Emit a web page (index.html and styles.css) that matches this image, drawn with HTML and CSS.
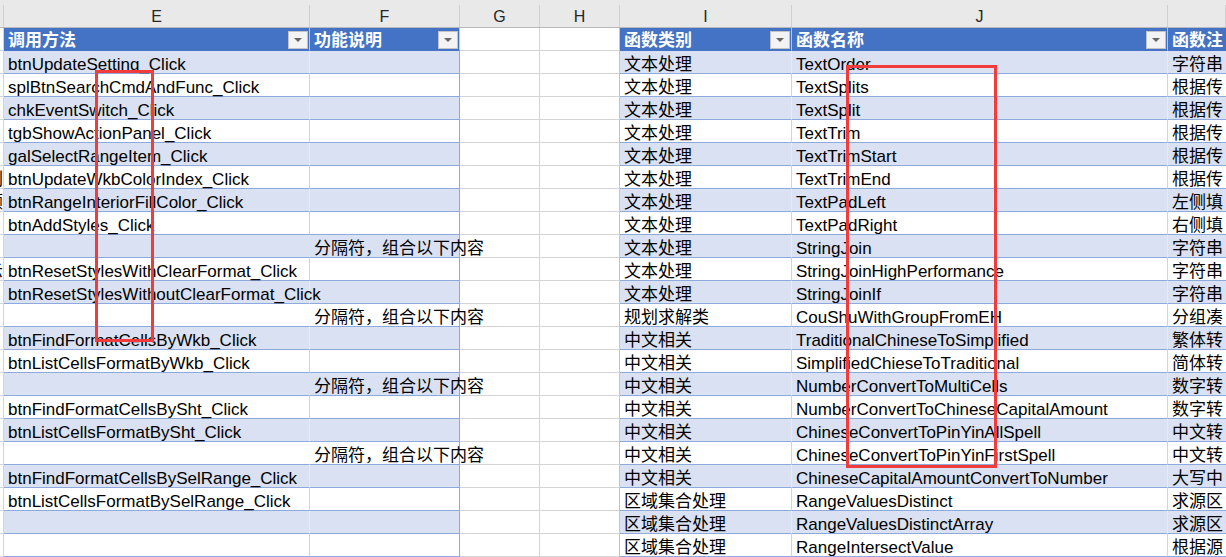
FILE: index.html
```html
<!DOCTYPE html>
<html lang="zh-CN">
<head>
<meta charset="utf-8">
<title>Sheet</title>
<link rel="stylesheet" href="styles.css">
</head>
<body>
<div class="sheet">
  <div class="row colhead">
    <div class="h"></div><div class="h">E</div><div class="h">F</div><div class="h">G</div><div class="h">H</div><div class="h">I</div><div class="h">J</div><div class="h"></div>
  </div>

  <div class="row">
    <div class="c d"></div>
    <div class="c th e"><span>调用方法</span><span class="btn"><i class="tri"></i></span></div>
    <div class="c th f"><span>功能说明</span><span class="btn"><i class="tri"></i></span></div>
    <div class="c g"></div><div class="c h"></div>
    <div class="c th i"><span>函数类别</span><span class="btn"><i class="tri"></i></span></div>
    <div class="c th j"><span>函数名称</span><span class="btn"><i class="tri"></i></span></div>
    <div class="c th k"><span>函数注</span></div>
  </div>

  <div class="row band"><div class="c d"></div><div class="c t e"><span class="ov">btnUpdateSetting_Click</span></div><div class="c t f"></div><div class="c g"></div><div class="c h"></div><div class="c t i">文本处理</div><div class="c t j">TextOrder</div><div class="c t k">字符串</div></div>
  <div class="row"><div class="c d"></div><div class="c t e"><span class="ov">splBtnSearchCmdAndFunc_Click</span></div><div class="c t f"></div><div class="c g"></div><div class="c h"></div><div class="c t i">文本处理</div><div class="c t j">TextSplits</div><div class="c t k">根据传</div></div>
  <div class="row band"><div class="c d"></div><div class="c t e"><span class="ov">chkEventSwitch_Click</span></div><div class="c t f"></div><div class="c g"></div><div class="c h"></div><div class="c t i">文本处理</div><div class="c t j">TextSplit</div><div class="c t k">根据传</div></div>
  <div class="row"><div class="c d"></div><div class="c t e"><span class="ov">tgbShowActionPanel_Click</span></div><div class="c t f"></div><div class="c g"></div><div class="c h"></div><div class="c t i">文本处理</div><div class="c t j">TextTrim</div><div class="c t k">根据传</div></div>
  <div class="row band"><div class="c d"></div><div class="c t e"><span class="ov">galSelectRangeItem_Click</span></div><div class="c t f"></div><div class="c g"></div><div class="c h"></div><div class="c t i">文本处理</div><div class="c t j">TextTrimStart</div><div class="c t k">根据传</div></div>
  <div class="row"><div class="c d"><span>刷</span></div><div class="c t e"><span class="ov">btnUpdateWkbColorIndex_Click</span></div><div class="c t f"></div><div class="c g"></div><div class="c h"></div><div class="c t i">文本处理</div><div class="c t j">TextTrimEnd</div><div class="c t k">根据传</div></div>
  <div class="row band"><div class="c d"><span>颜</span></div><div class="c t e"><span class="ov">btnRangeInteriorFillColor_Click</span></div><div class="c t f"></div><div class="c g"></div><div class="c h"></div><div class="c t i">文本处理</div><div class="c t j">TextPadLeft</div><div class="c t k">左侧填</div></div>
  <div class="row"><div class="c d"></div><div class="c t e"><span class="ov">btnAddStyles_Click</span></div><div class="c t f"></div><div class="c g"></div><div class="c h"></div><div class="c t i">文本处理</div><div class="c t j">TextPadRight</div><div class="c t k">右侧填</div></div>
  <div class="row band"><div class="c d"></div><div class="c t e sep"></div><div class="c t f"><span class="ov">分隔符，组合以下内容</span></div><div class="c g"></div><div class="c h"></div><div class="c t i">文本处理</div><div class="c t j">StringJoin</div><div class="c t k">字符串</div></div>
  <div class="row"><div class="c d"><span>示</span></div><div class="c t e"><span class="ov">btnResetStylesWithClearFormat_Click</span></div><div class="c t f"></div><div class="c g"></div><div class="c h"></div><div class="c t i">文本处理</div><div class="c t j">StringJoinHighPerformance</div><div class="c t k">字符串</div></div>
  <div class="row band"><div class="c d"><span>，</span></div><div class="c t e"><span class="ov">btnResetStylesWithoutClearFormat_Click</span></div><div class="c t f"></div><div class="c g"></div><div class="c h"></div><div class="c t i">文本处理</div><div class="c t j">StringJoinIf</div><div class="c t k">字符串</div></div>
  <div class="row"><div class="c d"></div><div class="c t e sep"></div><div class="c t f"><span class="ov">分隔符，组合以下内容</span></div><div class="c g"></div><div class="c h"></div><div class="c t i">规划求解类</div><div class="c t j">CouShuWithGroupFromEH</div><div class="c t k">分组凑</div></div>
  <div class="row band"><div class="c d"></div><div class="c t e"><span class="ov">btnFindFormatCellsByWkb_Click</span></div><div class="c t f"></div><div class="c g"></div><div class="c h"></div><div class="c t i">中文相关</div><div class="c t j">TraditionalChineseToSimplified</div><div class="c t k">繁体转</div></div>
  <div class="row"><div class="c d"></div><div class="c t e"><span class="ov">btnListCellsFormatByWkb_Click</span></div><div class="c t f"></div><div class="c g"></div><div class="c h"></div><div class="c t i">中文相关</div><div class="c t j">SimplifiedChieseToTraditional</div><div class="c t k">简体转</div></div>
  <div class="row band"><div class="c d"></div><div class="c t e sep"></div><div class="c t f"><span class="ov">分隔符，组合以下内容</span></div><div class="c g"></div><div class="c h"></div><div class="c t i">中文相关</div><div class="c t j">NumberConvertToMultiCells</div><div class="c t k">数字转</div></div>
  <div class="row"><div class="c d"></div><div class="c t e"><span class="ov">btnFindFormatCellsBySht_Click</span></div><div class="c t f"></div><div class="c g"></div><div class="c h"></div><div class="c t i">中文相关</div><div class="c t j">NumberConvertToChineseCapitalAmount</div><div class="c t k">数字转</div></div>
  <div class="row band"><div class="c d"></div><div class="c t e"><span class="ov">btnListCellsFormatBySht_Click</span></div><div class="c t f"></div><div class="c g"></div><div class="c h"></div><div class="c t i">中文相关</div><div class="c t j">ChineseConvertToPinYinAllSpell</div><div class="c t k">中文转</div></div>
  <div class="row"><div class="c d"></div><div class="c t e sep"></div><div class="c t f"><span class="ov">分隔符，组合以下内容</span></div><div class="c g"></div><div class="c h"></div><div class="c t i">中文相关</div><div class="c t j">ChineseConvertToPinYinFirstSpell</div><div class="c t k">中文转</div></div>
  <div class="row band"><div class="c d"></div><div class="c t e"><span class="ov">btnFindFormatCellsBySelRange_Click</span></div><div class="c t f"></div><div class="c g"></div><div class="c h"></div><div class="c t i">中文相关</div><div class="c t j">ChineseCapitalAmountConvertToNumber</div><div class="c t k">大写中</div></div>
  <div class="row"><div class="c d"></div><div class="c t e"><span class="ov">btnListCellsFormatBySelRange_Click</span></div><div class="c t f"></div><div class="c g"></div><div class="c h"></div><div class="c t i">区域集合处理</div><div class="c t j">RangeValuesDistinct</div><div class="c t k">求源区</div></div>
  <div class="row band"><div class="c d"></div><div class="c t e"></div><div class="c t f"></div><div class="c g"></div><div class="c h"></div><div class="c t i">区域集合处理</div><div class="c t j">RangeValuesDistinctArray</div><div class="c t k">求源区</div></div>
  <div class="row"><div class="c d"></div><div class="c t e"></div><div class="c t f"></div><div class="c g"></div><div class="c h"></div><div class="c t i">区域集合处理</div><div class="c t j">RangeIntersectValue</div><div class="c t k">根据源</div></div>
</div>

<div class="mark m1"></div>
<div class="mark m2"></div>
</body>
</html>
```

FILE: styles.css
```css
html, body {
  margin: 0;
  padding: 0;
}
body {
  width: 1226px;
  height: 557px;
  overflow: hidden;
  position: relative;
  background: #ffffff;
  color: #000000;
  font-family: "Liberation Sans", "Noto Sans CJK SC", sans-serif;
  font-size: 17px;
}
.sheet {
  display: flex;
  flex-direction: column;
}
.row {
  display: grid;
  grid-template-columns: 4px 306px 150px 80px 80px 172px 376px 58px;
}
.colhead {
  height: 28px;
  box-sizing: border-box;
  padding-top: 5px;
  background: #e9e9e9;
  border-bottom: 1px solid #b9b9b9;
}
.colhead .h {
  border-right: 1px solid #cfcfcf;
  text-align: center;
  font-size: 16px;
  line-height: 19px;
  padding-top: 2px;
  color: #262626;
}
.c {
  height: 23px;
  box-sizing: border-box;
  border-right: 1px solid #d4d4d4;
  border-bottom: 1px solid #d4d4d4;
  padding: 4px 0 0 4px;
  line-height: 20px;
  white-space: nowrap;
  min-width: 0;
}
.c.d {
  padding: 4px 0 0 0;
  overflow: hidden;
  display: flex;
  justify-content: flex-end;
}
.ov {
  position: relative;
  z-index: 1;
}
.t {
  border-bottom-color: #8ea9db;
}
.band .t {
  background: #d9e1f2;
  border-right-color: #e6ebf6;
}
.c.f,
.band .c.f {
  border-right-color: #8ea9db;
}
.c.h {
  border-right-color: #b4c6e7;
}
.c.sep,
.band .c.sep {
  border-right-color: transparent;
}
.c.k {
  border-right: none;
}
.th {
  background: #4472c4;
  color: #ffffff;
  font-weight: bold;
  border-bottom-color: #4472c4;
  border-right-color: #b9c8e6;
  display: flex;
  justify-content: space-between;
  align-items: flex-start;
  padding-top: 3px;
  padding-right: 1px;
}
.th.f {
  border-right-color: #c8c8c8;
}
.btn {
  width: 20px;
  height: 18px;
  box-sizing: border-box;
  background: #f3f3f3;
  border: 1px solid #c4c4c4;
  display: flex;
  align-items: center;
  justify-content: center;
  flex: none;
  margin-top: 0;
}
.tri {
  width: 0;
  height: 0;
  border-left: 4px solid transparent;
  border-right: 4px solid transparent;
  border-top: 4px solid #666666;
}
.mark {
  position: absolute;
  box-sizing: border-box;
  border: 3px solid #f23c3c;
  z-index: 5;
}
.m1 {
  left: 95px;
  top: 70px;
  width: 59px;
  height: 272px;
}
.m2 {
  left: 846px;
  top: 65px;
  width: 151px;
  height: 403px;
}
```
